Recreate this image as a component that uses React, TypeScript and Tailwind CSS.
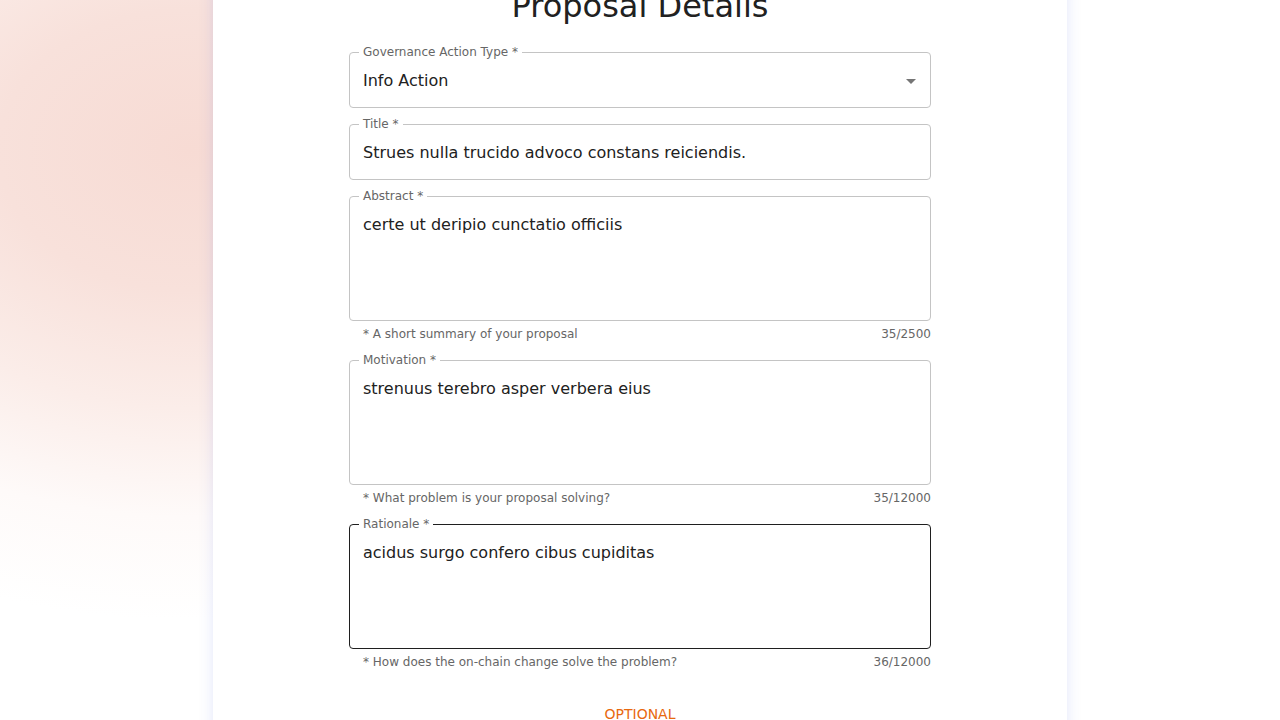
import React from "react";

const font = "font-['DejaVu_Sans',sans-serif]";

function Notch({ label }: { label: string }) {
  return (
    <span className="absolute left-[9px] top-[-9px] bg-white px-[4px] text-[12px] leading-[16px] text-[#666666]">
      {label}
    </span>
  );
}

function TextField({ label, value, select }: { label: string; value: string; select?: boolean }) {
  return (
    <div className="relative h-[56px] rounded-[4px] border border-[#c4c4c4] flex items-center pl-[13px] pr-[14px] pt-[1px]">
      <Notch label={label} />
      <span className="text-[16px] text-[#212121]">{value}</span>
      {select && (
        <svg className="absolute right-[7px] top-[16px]" width="24" height="24" viewBox="0 0 24 24">
          <path d="M7 10l5 5 5-5z" fill="#757575" />
        </svg>
      )}
    </div>
  );
}

function AreaField({
  label,
  value,
  helper,
  count,
  focused,
}: {
  label: string;
  value: string;
  helper: string;
  count: string;
  focused?: boolean;
}) {
  return (
    <div className="flex flex-col">
      <div
        className={`relative h-[125px] rounded-[4px] border pl-[13px] pr-[14px] pt-[15.5px] ${
          focused ? "border-[#1f1f1f]" : "border-[#c4c4c4]"
        }`}
      >
        <Notch label={label} />
        <div className="text-[16px] leading-[23px] text-[#212121]">{value}</div>
      </div>
      <div className="mt-[3px] flex justify-between text-[12px] leading-[20px] text-[#666666]">
        <span className="ml-[14px]">{helper}</span>
        <span>{count}</span>
      </div>
    </div>
  );
}

export default function App() {
  return (
    <div
      className={`relative h-[720px] w-full overflow-hidden bg-white ${font} bg-[radial-gradient(ellipse_640px_470px_at_190px_150px,#f7dbd4_0%,#f8e1db_30%,#fbede9_55%,#fefaf9_78%,#ffffff_100%)]`}
    >
      <div className="flex justify-center">
        <div className="mt-[-15px] w-[854px] bg-white shadow-[0_0_14px_rgba(60,80,220,0.14)] pb-[40px]">
          <div className="mx-auto w-[582px]">
            <h1 className="text-center text-[32px] leading-[42px] text-[#212121] font-normal">Proposal Details</h1>
            <div className="mt-[25px] flex flex-col gap-[16px]">
              <TextField label="Governance Action Type *" value="Info Action" select />
              <TextField label="Title *" value="Strues nulla trucido advoco constans reiciendis." />
              <AreaField
                label="Abstract *"
                value="certe ut deripio cunctatio officiis"
                helper="* A short summary of your proposal"
                count="35/2500"
              />
              <AreaField
                label="Motivation *"
                value="strenuus terebro asper verbera eius"
                helper="* What problem is your proposal solving?"
                count="35/12000"
              />
              <AreaField
                label="Rationale *"
                value="acidus surgo confero cibus cupiditas"
                helper="* How does the on-chain change solve the problem?"
                count="36/12000"
                focused
              />
            </div>
            <div className="mt-[30px] text-center text-[14px] font-medium leading-[24px] text-[#e8690f]">OPTIONAL</div>
          </div>
        </div>
      </div>
    </div>
  );
}
